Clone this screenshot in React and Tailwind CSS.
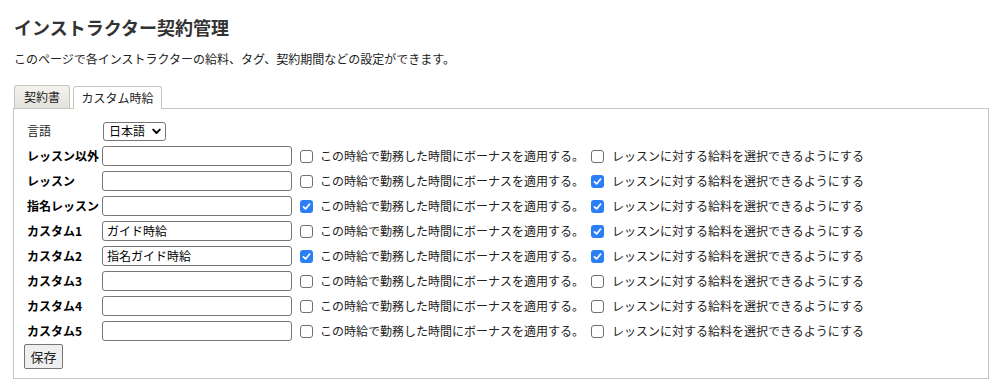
const ROWS = [
  { label: "レッスン以外", value: "", bonus: false, select: false },
  { label: "レッスン", value: "", bonus: false, select: true },
  { label: "指名レッスン", value: "", bonus: true, select: true },
  { label: "カスタム1", value: "ガイド時給", bonus: false, select: true },
  { label: "カスタム2", value: "指名ガイド時給", bonus: true, select: true },
  { label: "カスタム3", value: "", bonus: false, select: false },
  { label: "カスタム4", value: "", bonus: false, select: false },
  { label: "カスタム5", value: "", bonus: false, select: false },
];

function Check({ checked }) {
  if (checked) {
    return (
      <span className="w-[13px] h-[13px] rounded-[3px] bg-[#2b7ff6] flex items-center justify-center shrink-0">
        <svg width="9" height="9" viewBox="0 0 10 10" fill="none">
          <path d="M1.6 5.4 L4 7.7 L8.5 2.3" stroke="white" strokeWidth="1.9" strokeLinecap="round" strokeLinejoin="round" />
        </svg>
      </span>
    );
  }
  return <span className="block w-[13px] h-[13px] rounded-[3px] border border-[#6f6f6f] bg-white shrink-0" />;
}

export default function App() {
  return (
    <div className="bg-white w-[1001px] h-[388px] px-[13px] text-[#1c1c1c]" style={{ fontFamily: '"Noto Sans CJK JP", "Noto Sans", sans-serif' }}>
      <h1 className="pt-[16px] pl-px text-[18px] leading-[22px] font-bold text-[#333]">インストラクター契約管理</h1>
      <p className="mt-[12px] pl-px text-[12px] leading-[18px] text-[#222]">
        このページで各インストラクターの給料、タグ、契約期間などの設定ができます。
      </p>

      {/* Tabs */}
      <div className="mt-[17px] flex items-end gap-[3px] pl-px">
        <div className="h-[23px] w-[56px] border border-[#c7c5be] border-b-0 rounded-t-[3px] bg-gradient-to-b from-[#f3f2ef] to-[#e4e2dc] flex items-center justify-center text-[12px] text-[#222]">
          契約書
        </div>
        <div className="relative z-10 -mb-px h-[23px] w-[89px] border border-[#c7c5be] border-b-0 rounded-t-[3px] bg-white flex items-center justify-center text-[12px] text-[#222]">
          カスタム時給
        </div>
      </div>

      {/* Panel */}
      <div className="border border-[#c7c5be] w-[976px] h-[271px] pt-[12px] px-[10px]">
        <div className="flex items-center h-[20px] mb-[5px]">
          <span className="w-[79px] pl-[3px] text-[12px]">言語</span>
          <div className="h-[19px] w-[63px] border border-[#767676] rounded-[3px] flex items-center justify-between pl-[5px] pr-[4px] text-[12px] text-black">
            日本語
            <svg width="9" height="7" viewBox="0 0 9 7" fill="none">
              <path d="M1.2 1.6 L4.5 5 L7.8 1.6" stroke="black" strokeWidth="1.9" strokeLinecap="round" strokeLinejoin="round" />
            </svg>
          </div>
        </div>

        {ROWS.map((r) => (
          <div key={r.label} className="flex items-center h-[20px] mb-[5px]">
            <span className="w-[78px] pl-[3px] text-[12px] font-bold text-black whitespace-nowrap">{r.label}</span>
            <div className="h-[20px] w-[190px] border border-[#767676] rounded-[3px] flex items-center px-[4px] text-[12px] text-black">
              {r.value}
            </div>
            <span className="ml-[8px]">
              <Check checked={r.bonus} />
            </span>
            <span className="ml-[7px] w-[271px] text-[12px] text-[#222] whitespace-nowrap">この時給で勤務した時間にボーナスを適用する。</span>
            <Check checked={r.select} />
            <span className="ml-[8px] text-[12px] text-[#222] whitespace-nowrap">レッスンに対する給料を選択できるようにする</span>
          </div>
        ))}

        <button className="-mt-[2px] h-[25px] w-[39px] border border-[#767676] rounded-[2px] bg-[#efefef] text-[13px] text-[#222] flex items-center justify-center">
          保存
        </button>
      </div>
    </div>
  );
}
